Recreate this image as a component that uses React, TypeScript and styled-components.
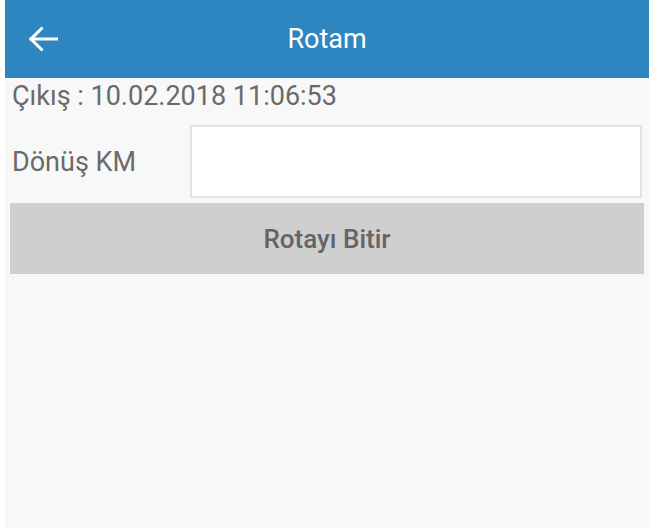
import React from "react";
import styled, { createGlobalStyle } from "styled-components";

const Global = createGlobalStyle`
  html, body { margin: 0; padding: 0; background: #ffffff; }
  body { font-family: Roboto, "Noto Sans", sans-serif; }
  * { box-sizing: border-box; }
`;

const Screen = styled.div`
  margin-left: 5px;
  width: 644px;
  height: 528px;
  background: #f8f8f8;
  display: flex;
  flex-direction: column;
`;

const AppBar = styled.header`
  height: 78px;
  background: #2e86c1;
  display: flex;
  align-items: center;
  position: relative;
  padding-left: 19px;
`;

const BackButton = styled.button`
  border: none;
  background: transparent;
  padding: 0;
  width: 38px;
  height: 38px;
  display: flex;
  align-items: center;
  justify-content: center;
  cursor: pointer;
`;

const Title = styled.h1`
  position: absolute;
  left: 0;
  right: 0;
  top: 0;
  bottom: 0;
  margin: 0;
  display: flex;
  align-items: center;
  justify-content: center;
  color: #ffffff;
  font-size: 27px;
  font-weight: 400;
  pointer-events: none;
`;

const Content = styled.main`
  display: flex;
  flex-direction: column;
  padding: 0 5px;
`;

const InfoLine = styled.div`
  color: #6a6a6a;
  font-size: 27px;
  line-height: 36px;
  padding-left: 2px;
`;

const FieldRow = styled.div`
  display: flex;
  align-items: center;
  margin-top: 11px;
  height: 73px;
`;

const Label = styled.label`
  width: 180px;
  color: #6a6a6a;
  font-size: 27px;
  padding-left: 2px;
`;

const Input = styled.input`
  flex: 1;
  height: 73px;
  margin-right: 2px;
  border: 2px solid #e2e2e2;
  background: #ffffff;
  font-size: 22px;
  outline: none;
`;

const ActionButton = styled.button`
  margin-top: 5px;
  height: 71px;
  border: none;
  background: #cfcfcf;
  color: #646464;
  font-family: Roboto, sans-serif;
  font-size: 26px;
  font-weight: 500;
  width: 634px;
`;

export default function App() {
  return (
    <>
      <Global />
      <Screen>
        <AppBar>
          <BackButton aria-label="Geri">
            <svg width="36" height="36" viewBox="0 0 24 24" fill="none" stroke="#fff" strokeWidth="2" strokeLinecap="square">
              <path d="M21 12H4" />
              <path d="M11 5l-7 7 7 7" />
            </svg>
          </BackButton>
          <Title>Rotam</Title>
        </AppBar>
        <Content>
          <InfoLine>Çıkış : 10.02.2018 11:06:53</InfoLine>
          <FieldRow>
            <Label>Dönüş KM</Label>
            <Input type="text" />
          </FieldRow>
          <ActionButton>Rotayı Bitir</ActionButton>
        </Content>
      </Screen>
    </>
  );
}
